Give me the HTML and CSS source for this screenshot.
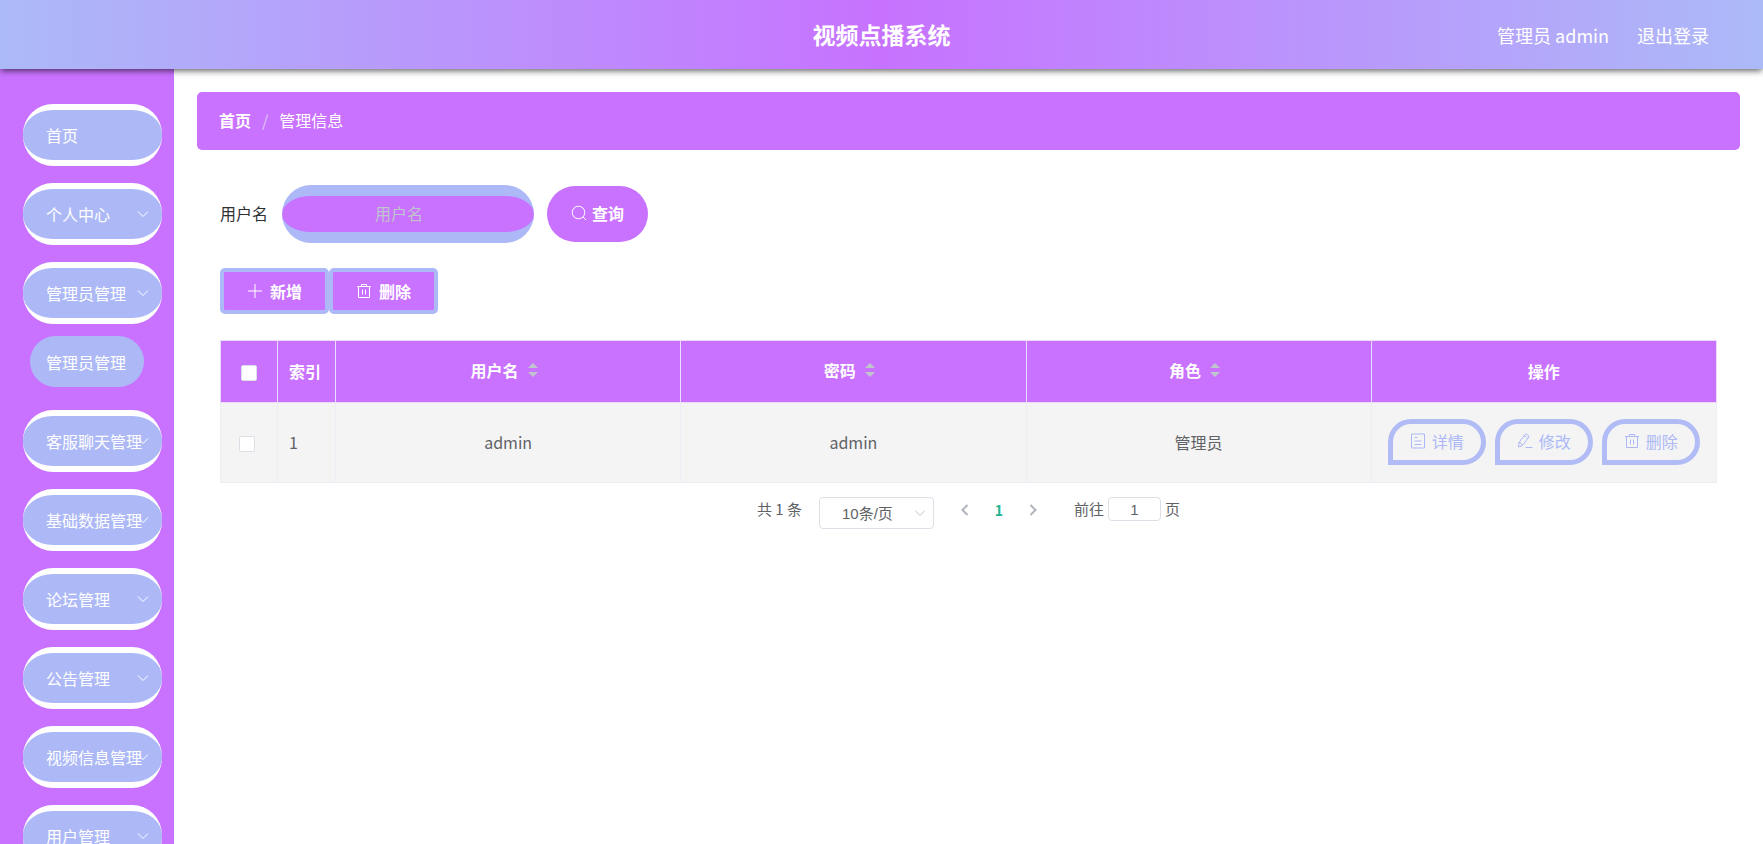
FILE: index.html
```html
<!DOCTYPE html>
<html lang="zh-CN">

<head>
    <meta charset="UTF-8">
    <meta name="viewport" content="width=device-width, initial-scale=1.0">
    <title>视频点播系统</title>
    <link rel="stylesheet" href="styles.css">
</head>
<body>
    <!-- shared icons -->
    <svg class="sprite" aria-hidden="true">
        <symbol id="icon-down" viewBox="0 0 12 12"><path d="M1 3.500l5 5 5-5" /></symbol>
        <symbol id="icon-left" viewBox="0 0 12 12"><path d="M8.500 1l-5 5 5 5" /></symbol>
        <symbol id="icon-right" viewBox="0 0 12 12"><path d="M3.500 1l5 5-5 5" /></symbol>
        <symbol id="icon-search" viewBox="0 0 16 16"><circle cx="7.500" cy="7.500" r="6.300" /><path d="M12 12l3 3" /></symbol>
        <symbol id="icon-plus" viewBox="0 0 16 16"><path d="M8 1v14M1 8h14" /></symbol>
        <symbol id="icon-delete" viewBox="0 0 16 16"><path d="M1 3.500h14M2.500 3.500v11h11v-11M5.500 3.500v-2h5v2M6.500 6.500v5M9.500 6.500v5" /></symbol>
        <symbol id="icon-detail" viewBox="0 0 16 16"><path d="M1.500 1h13v14h-13zM4.500 4.500h3M4.500 8h7M4.500 11.500h7" /></symbol>
        <symbol id="icon-edit" viewBox="0 0 16 16"><path d="M1.500 14l.5-4.500L8 1.500c1-1 4.500.8 3.800 2.600L5.500 12.500zM2 9.500c1.500 0 3 1.200 3.500 3M7 3c1.500 0 3 1 3.500 2.700M8.500 14.500h7" /></symbol>
    </svg>

    <header class="header">
        <h1 class="header-title">视频点播系统</h1>
        <div class="header-user">
            <span>管理员 admin</span>
            <a href="#">退出登录</a>
        </div>
    </header>

    <div class="container">
        <nav class="sidebar">
            <ul class="menu">
                <li><a class="menu-item" href="#">首页</a></li>
                <li><button class="menu-item">个人中心<svg class="icon menu-arrow"><use href="#icon-down" /></svg></button></li>
                <li>
                    <button class="menu-item">管理员管理<svg class="icon menu-arrow"><use href="#icon-down" /></svg></button>
                    <ul class="submenu">
                        <li><a class="submenu-item" href="#">管理员管理</a></li>
                    </ul>
                </li>
                <li><button class="menu-item">客服聊天管理<svg class="icon menu-arrow"><use href="#icon-down" /></svg></button></li>
                <li><button class="menu-item">基础数据管理<svg class="icon menu-arrow"><use href="#icon-down" /></svg></button></li>
                <li><button class="menu-item">论坛管理<svg class="icon menu-arrow"><use href="#icon-down" /></svg></button></li>
                <li><button class="menu-item">公告管理<svg class="icon menu-arrow"><use href="#icon-down" /></svg></button></li>
                <li><button class="menu-item">视频信息管理<svg class="icon menu-arrow"><use href="#icon-down" /></svg></button></li>
                <li><button class="menu-item">用户管理<svg class="icon menu-arrow"><use href="#icon-down" /></svg></button></li>
            </ul>
        </nav>

        <main class="main">
            <div class="breadcrumb">
                <a href="#">首页</a>
                <span class="separator">/</span>
                <span>管理信息</span>
            </div>

            <div class="content">
                <form class="search-form">
                    <label for="username">用户名</label>
                    <input class="search-input" id="username" type="text" placeholder="用户名">
                    <button class="search-button" type="button"><svg class="icon"><use href="#icon-search" /></svg>查询</button>
                </form>

                <div class="toolbar">
                    <button class="tool-button"><svg class="icon"><use href="#icon-plus" /></svg>新增</button>
                    <button class="tool-button"><svg class="icon"><use href="#icon-delete" /></svg>删除</button>
                </div>

                <table class="data-table">
                    <colgroup>
                        <col class="col-check">
                        <col class="col-index">
                        <col>
                        <col>
                        <col>
                        <col>
                    </colgroup>
                    <thead>
                        <tr>
                            <th><input type="checkbox" aria-label="全选"></th>
                            <th class="index">索引</th>
                            <th><span class="sortable">用户名<i class="caret"></i></span></th>
                            <th><span class="sortable">密码<i class="caret"></i></span></th>
                            <th><span class="sortable">角色<i class="caret"></i></span></th>
                            <th>操作</th>
                        </tr>
                    </thead>
                    <tbody>
                        <tr>
                            <td class="check"><input type="checkbox" aria-label="选择"></td>
                            <td class="index">1</td>
                            <td>admin</td>
                            <td>admin</td>
                            <td>管理员</td>
                            <td>
                                <div class="actions">
                                    <button class="action-button"><svg class="icon"><use href="#icon-detail" /></svg>详情</button>
                                    <button class="action-button"><svg class="icon"><use href="#icon-edit" /></svg>修改</button>
                                    <button class="action-button"><svg class="icon"><use href="#icon-delete" /></svg>删除</button>
                                </div>
                            </td>
                        </tr>
                    </tbody>
                </table>

                <div class="pagination">
                    <span>共 1 条</span>
                    <div class="page-size">
                        <select aria-label="每页条数">
                            <option>10条/页</option>
                            <option>20条/页</option>
                        </select>
                        <svg class="icon"><use href="#icon-down" /></svg>
                    </div>
                    <div class="pager">
                        <button aria-label="上一页"><svg class="icon"><use href="#icon-left" /></svg></button>
                        <button class="active">1</button>
                        <button aria-label="下一页"><svg class="icon"><use href="#icon-right" /></svg></button>
                    </div>
                    <div class="jump">
                        <label for="page">前往</label>
                        <input id="page" type="text" value="1">
                        <span>页</span>
                    </div>
                </div>
            </div>
        </main>
    </div>
</body>

</html>
```

FILE: styles.css
```css
* {
    box-sizing: border-box;
}

html,
body {
    height: 100%;
    margin: 0;
    padding: 0;
}

body {
    display: flex;
    flex-direction: column;
    overflow: hidden;
    background-color: #fff;
    color: #303133;
    font-family: "Noto Sans CJK SC", sans-serif;
    font-size: 16px;
    line-height: 24px;
}

ul {
    margin: 0;
    padding: 0;
    list-style: none;
}

a {
    color: inherit;
    text-decoration: none;
}

button {
    font: inherit;
    cursor: pointer;
}

.sprite {
    display: none;
}

.icon {
    width: 16px;
    height: 16px;
    fill: none;
    stroke: currentColor;
    stroke-width: 1;
}

/* header */
.header {
    position: relative;
    z-index: 1;
    flex: none;
    height: 69px;
    padding: 0 54px;
    display: grid;
    grid-template-columns: 1fr auto 1fr;
    align-items: center;
    background: linear-gradient(90deg, #acbaf8, #c772ff 50%, #acbaf8);
    box-shadow: 0 3px 6px -1px rgba(0, 0, 0, 0.6);
    color: #fff;
}

.header-title {
    grid-column: 2;
    margin: 0;
    padding-bottom: 2px;
    font-size: 23px;
    line-height: 32px;
}

.header-user {
    display: flex;
    justify-content: flex-end;
    gap: 28px;
    font-size: 18px;
}

.container {
    flex: 1;
    min-height: 0;
    display: flex;
}

/* sidebar */
.sidebar {
    flex: none;
    width: 174px;
    padding: 35px 12px 0 23px;
    overflow: hidden;
    background-color: #c972ff;
}

.menu {
    display: flex;
    flex-direction: column;
    gap: 17px;
}

.menu-item {
    position: relative;
    width: 100%;
    height: 62px;
    padding: 0 0 0 23px;
    display: flex;
    align-items: center;
    border: 0 solid #fff;
    border-width: 6px 0;
    border-radius: 30px;
    background-color: #adb9f7;
    color: #fff;
    white-space: nowrap;
}

.menu-arrow {
    position: absolute;
    right: 13px;
    width: 12px;
    height: 12px;
}

.submenu {
    padding: 12px 18px 6px 7px;
}

.submenu-item {
    height: 51px;
    padding-left: 16px;
    display: flex;
    align-items: center;
    border-radius: 26px;
    background-color: #adb9f7;
    color: #fff;
    white-space: nowrap;
}

/* main */
.main {
    flex: 1;
    min-width: 0;
    padding: 23px;
    overflow: auto;
}

.breadcrumb {
    height: 58px;
    padding: 0 22px 2px;
    display: flex;
    align-items: center;
    gap: 11px;
    border-radius: 5px;
    background-color: #c972ff;
    color: #fff;
}

.breadcrumb a {
    font-weight: bold;
}

.breadcrumb .separator {
    color: #dfc4f4;
}

.content {
    padding: 35px 23px 0;
}

.search-form {
    display: flex;
    align-items: center;
}

.search-form label {
    padding-bottom: 2px;
}

.search-input {
    width: 252px;
    height: 58px;
    margin: 0 13px 0 14px;
    padding: 0 30px 2px 12px;
    border: 0 solid #adb9f7;
    border-width: 11px 0;
    border-radius: 30px;
    background-color: #c972ff;
    color: #fff;
    font: inherit;
    text-align: center;
}

.search-input::placeholder {
    color: #c0c4cc;
}

.search-button {
    height: 56px;
    padding: 0 24px 2px;
    display: flex;
    align-items: center;
    gap: 5px;
    border: none;
    border-radius: 30px;
    background-color: #c972ff;
    color: #fff;
    font-weight: bold;
}

.toolbar {
    margin: 25px 0 26px;
    display: flex;
}

.tool-button {
    height: 46px;
    padding: 0 23px;
    display: flex;
    align-items: center;
    gap: 7px;
    border: 4px solid #adb9f7;
    border-radius: 5px;
    background-color: #c972ff;
    color: #fff;
    font-weight: bold;
}

/* table */
.data-table {
    width: 100%;
    table-layout: fixed;
    border-collapse: collapse;
    background-color: #f4f4f4;
    color: #606266;
    text-align: center;
}

.col-check {
    width: 57px;
}

.col-index {
    width: 58px;
}

.data-table th {
    height: 62px;
    padding: 0 0 2px;
    border: 1px solid #ecdcfc;
    background-color: #c972ff;
    color: #fff;
}

.data-table td {
    height: 80px;
    padding: 0 0 2px;
    border: 1px solid #ebeef5;
}

.data-table .index {
    padding-left: 11px;
    text-align: left;
}

.data-table .check {
    padding-right: 5px;
}

.data-table input {
    width: 16px;
    height: 16px;
    margin: 0;
    appearance: none;
    border: 1px solid #dcdfe6;
    border-radius: 2px;
    background-color: #fff;
    vertical-align: middle;
}

.sortable {
    padding: 0 8px 2px 0;
    display: flex;
    align-items: center;
    justify-content: center;
    gap: 9px;
}

.caret {
    display: flex;
    flex-direction: column;
    gap: 4px;
}

.caret::before,
.caret::after {
    content: "";
    border: 5px solid transparent;
}

.caret::before {
    border-top: none;
    border-bottom-color: #c0c4cc;
}

.caret::after {
    border-bottom: none;
    border-top-color: #c0c4cc;
}

.actions {
    display: flex;
    justify-content: center;
    gap: 9px;
}

.action-button {
    width: 98px;
    height: 46px;
    padding: 0 0 2px;
    display: flex;
    align-items: center;
    justify-content: center;
    gap: 6px;
    border: 5px solid #b1bbf5;
    border-radius: 24px 24px 24px 0;
    background-color: transparent;
    color: #adb9f7;
}

/* pagination */
.pagination {
    margin-top: 14px;
    display: flex;
    align-items: flex-start;
    justify-content: center;
    color: #606266;
    font-size: 15px;
}

.page-size {
    position: relative;
    margin: 0 14px 0 17px;
}

.page-size select {
    width: 115px;
    height: 32px;
    padding: 0 22px;
    display: block;
    appearance: none;
    border: 1px solid #dcdfe6;
    border-radius: 4px;
    background-color: #fff;
    color: #606266;
    font-family: "Liberation Sans", "Noto Sans CJK SC", sans-serif;
    font-size: 15px;
}

.page-size .icon {
    position: absolute;
    top: 10px;
    right: 8px;
    width: 12px;
    height: 12px;
    color: #c0c4cc;
    pointer-events: none;
}

.pager {
    display: flex;
}

.pager button {
    width: 34px;
    height: 26px;
    padding: 0;
    display: flex;
    align-items: center;
    justify-content: center;
    border: none;
    background: none;
    color: #b0b4bc;
    font-size: 14px;
    font-weight: bold;
}

.pager .active {
    color: #26b394;
}

.pager .icon {
    width: 12px;
    height: 12px;
    stroke-width: 2;
}

.jump {
    margin-left: 24px;
    display: flex;
    align-items: center;
    gap: 4px;
}

.jump input {
    width: 53px;
    height: 24px;
    padding: 0;
    border: 1px solid #dcdfe6;
    border-radius: 4px;
    color: #606266;
    font-family: "Liberation Sans", sans-serif;
    font-size: 15px;
    text-align: center;
}
```
